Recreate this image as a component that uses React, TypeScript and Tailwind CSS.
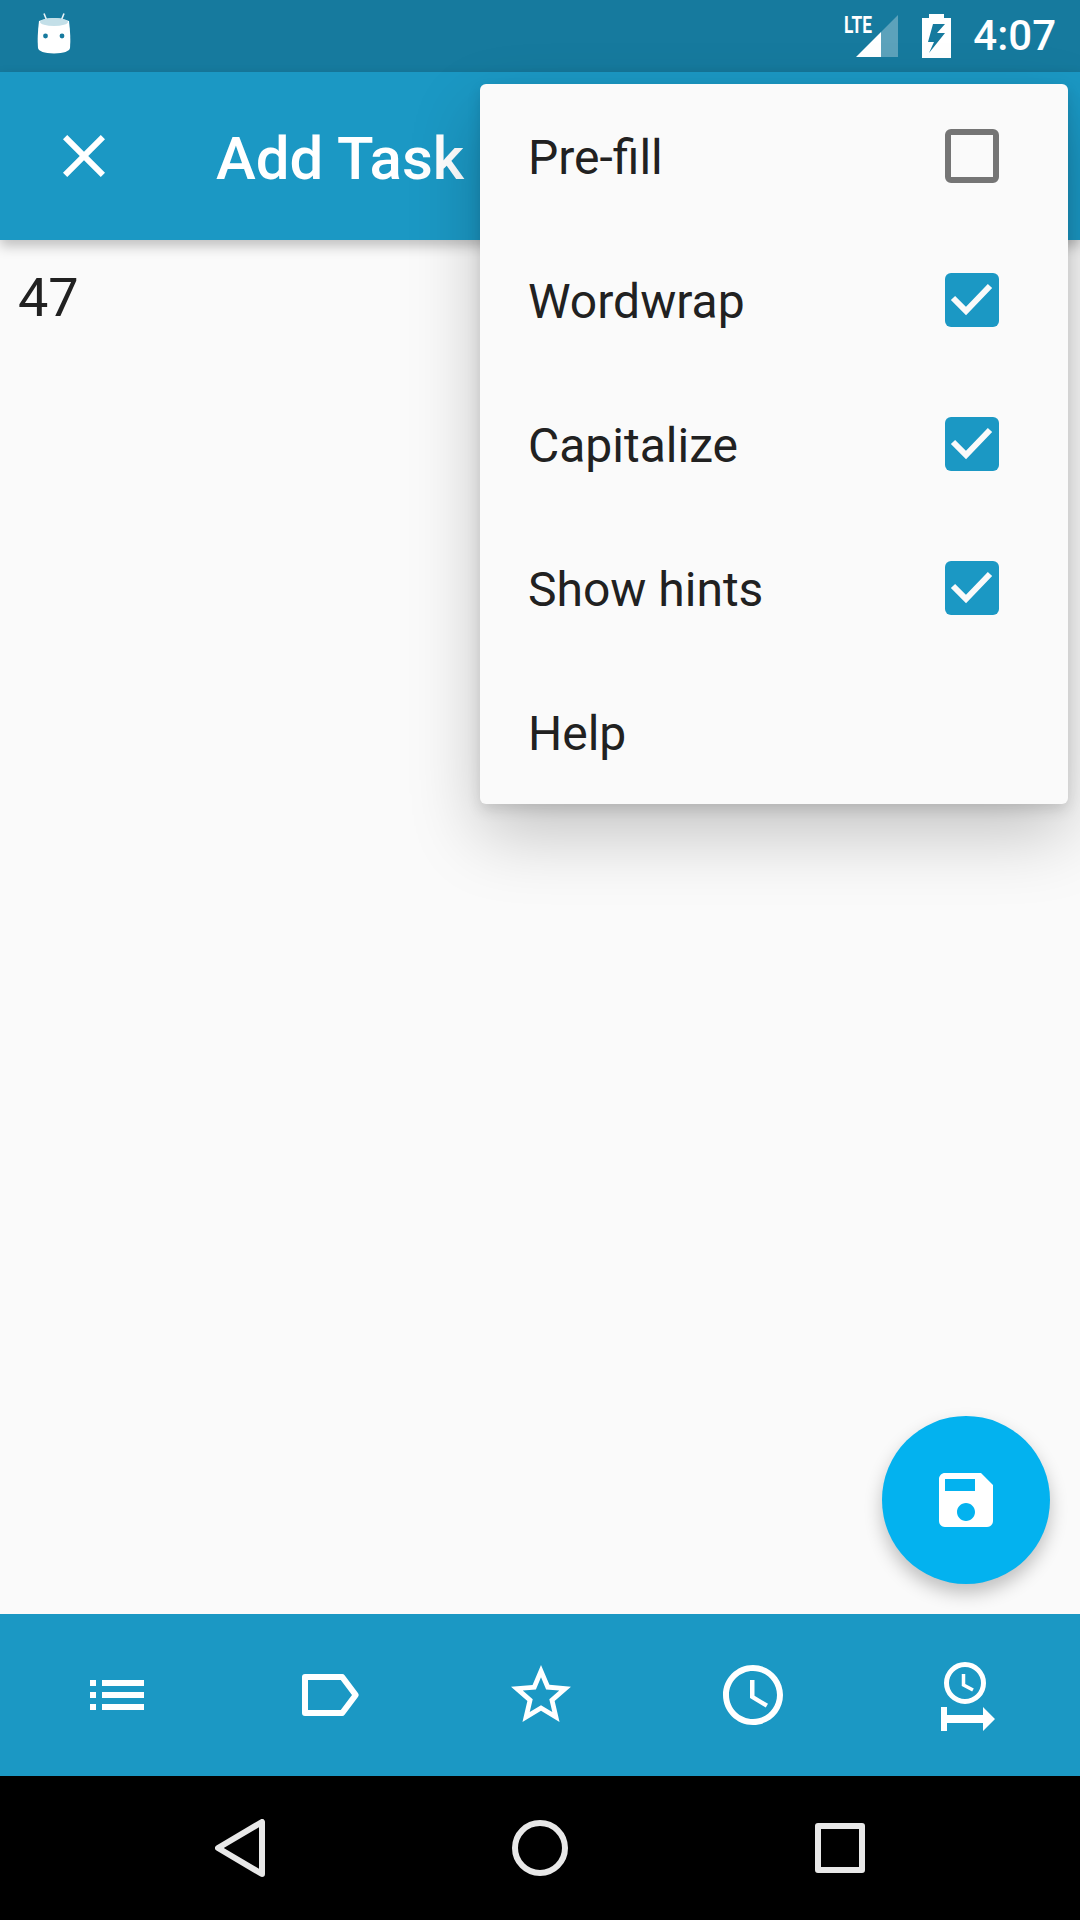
import React from 'react';

const menuItems = [
    { label: 'Pre-fill', checked: false },
    { label: 'Wordwrap', checked: true },
    { label: 'Capitalize', checked: true },
    { label: 'Show hints', checked: true },
    { label: 'Help' },
];

const Checkbox = ({ checked }: { checked: boolean }) =>
    checked ? (
        <span className="flex h-[54px] w-[54px] items-center justify-center rounded-[6px] bg-[#1b98c4]">
            <svg width="54" height="54" viewBox="0 0 54 54" fill="none">
                <path d="M8 25 L21 38 L45 13" stroke="#fafafa" strokeWidth="6" />
            </svg>
        </span>
    ) : (
        <span className="h-[54px] w-[54px] rounded-[6px] border-[6px] border-[#757575]" />
    );

const StatusBar = () => (
    <div className="relative flex h-[72px] shrink-0 items-center justify-between bg-[#167a9e] pr-[24px] pl-[37px]">
        {/* notification icon */}
        <svg width="34" height="42" viewBox="0 0 34 42" className="mt-[-5px]">
            <path d="M7 0.5 L10 8 M27 0.5 L24 8" stroke="#e8f3f7" strokeWidth="1.6" />
            <path d="M2 8 Q17 2 32 8 Q34 24 33 35 Q32 40 17 40.5 Q2 40 1 35 Q0 24 2 8 Z" fill="#ffffff" />
            <ellipse cx="17" cy="9" rx="14" ry="4" fill="#c3dfe8" />
            <circle cx="8.5" cy="23" r="2.4" fill="#167a9e" />
            <circle cx="25" cy="23" r="2.4" fill="#167a9e" />
        </svg>
        <div className="flex items-center">
            <div className="relative h-[72px] w-[54px]">
                <span className="absolute top-[11px] left-[-1px] origin-left scale-x-[0.72] font-['Roboto',sans-serif] text-[24px] leading-[28px] font-bold text-white">
                    LTE
                </span>
                <svg width="44" height="44" viewBox="0 0 44 44" className="absolute top-[14px] left-[10px]">
                    <path d="M1 43 L26 18 V43 Z" fill="#ffffff" />
                    <path d="M26 18 L43 1 V43 H26 Z" fill="#ffffff" fillOpacity="0.3" />
                </svg>
            </div>
            <svg width="29" height="44" viewBox="0 0 29 44" className="ml-[23px]">
                <path
                    fillRule="evenodd"
                    d="M7 0 H22 V4 H29 V44 H0 V4 H7 Z M11 10 L6 28 H12 L7 39 L23 19 H15 L23 10 Z"
                    fill="#ffffff"
                />
            </svg>
            <span className="ml-[22px] font-['Roboto',sans-serif] text-[42px] leading-none font-medium text-white">
                4:07
            </span>
        </div>
    </div>
);

const BottomBar = () => (
    <div className="grid h-[162px] shrink-0 grid-cols-5 items-center bg-[#1b98c4] pr-[9px] pl-[11px] text-white">
        <div className="flex justify-center">
            <svg width="72" height="72" viewBox="0 0 24 24" fill="currentColor">
                <path d="M3 13h2v-2H3v2zm0 4h2v-2H3v2zm0-8h2V7H3v2zm4 4h14v-2H7v2zm0 4h14v-2H7v2zM7 7v2h14V7H7z" />
            </svg>
        </div>
        <div className="flex justify-center">
            <svg width="72" height="72" viewBox="0 0 24 24" fill="none">
                <path d="M4 6 H16.4 L20.9 12 L16.4 18 H4 Z" stroke="currentColor" strokeWidth="2" strokeLinejoin="round" />
            </svg>
        </div>
        <div className="flex justify-center">
            <svg width="72" height="72" viewBox="0 0 24 24" fill="currentColor">
                <path d="M22 9.24l-7.19-.62L12 2 9.19 8.63 2 9.24l5.46 4.73L5.82 21 12 17.27 18.18 21l-1.63-7.03L22 9.24zM12 15.4l-3.76 2.27 1-4.28-3.32-2.88 4.38-.38L12 6.1l1.71 4.04 4.38.38-3.32 2.88 1 4.28L12 15.4z" />
            </svg>
        </div>
        <div className="flex justify-center">
            <svg width="72" height="72" viewBox="0 0 24 24" fill="currentColor">
                <path d="M11.99 2C6.47 2 2 6.48 2 12s4.47 10 9.99 10C17.52 22 22 17.52 22 12S17.52 2 11.99 2zM12 20c-4.42 0-8-3.58-8-8s3.58-8 8-8 8 3.58 8 8-3.58 8-8 8z" />
                <path d="M12.5 7H11v6l5.25 3.15.75-1.23-4.5-2.67z" />
            </svg>
        </div>
        <div className="flex justify-center">
            {/* clock above arrow to bar */}
            <svg width="72" height="72" viewBox="0 0 72 72" fill="none">
                <circle cx="36" cy="24" r="18.5" stroke="currentColor" strokeWidth="5" />
                <path d="M34.5 15 V26 L44 31" stroke="currentColor" strokeWidth="3.5" />
                <path d="M12 48 H18 V56 H54 V48 L66 60 L54 72 V64 H18 V72 H12 Z" fill="currentColor" />
            </svg>
        </div>
    </div>
);

const NavBar = () => (
    <div className="grid h-[144px] shrink-0 grid-cols-3 items-center bg-black px-[90px]">
        <div className="flex justify-center">
            <svg width="50" height="58" viewBox="0 0 50 58" fill="none">
                <path d="M3 29 L47 3 V55 Z" stroke="#e8e8e8" strokeWidth="6" strokeLinejoin="round" />
            </svg>
        </div>
        <div className="flex justify-center">
            <span className="h-[56px] w-[56px] rounded-full border-[6px] border-[#e8e8e8]" />
        </div>
        <div className="flex justify-center">
            <span className="h-[50px] w-[50px] rounded-[3px] border-[6px] border-[#e8e8e8]" />
        </div>
    </div>
);

export default function App() {
    return (
        <div className="relative flex h-[1920px] w-[1080px] flex-col overflow-hidden bg-[#fafafa] font-['Roboto',sans-serif]">
            <StatusBar />

            {/* toolbar */}
            <div className="relative z-10 flex h-[168px] shrink-0 items-center bg-[#1b98c4] pl-[48px] shadow-[0_6px_12px_rgba(0,0,0,0.24)]">
                <svg width="72" height="72" viewBox="0 0 24 24" fill="#ffffff">
                    <path d="M19 6.41L17.59 5 12 10.59 6.41 5 5 6.41 10.59 12 5 17.59 6.41 19 12 13.41 17.59 19 19 17.59 13.41 12z" />
                </svg>
                <h1 className="ml-[96px] pt-[5px] text-[60px] leading-none font-medium text-white">Add Task</h1>
            </div>

            {/* editor */}
            <div className="relative flex-1 pt-[26px] pl-[18px]">
                <p className="text-[54px] leading-[64px] text-[#212121]">47</p>

                <button className="absolute right-[30px] bottom-[30px] flex h-[168px] w-[168px] items-center justify-center rounded-full bg-[#03b2ef] shadow-[0_9px_18px_rgba(0,0,0,0.24)]">
                    <svg width="72" height="72" viewBox="0 0 24 24" fill="#ffffff">
                        <path d="M17 3H5c-1.11 0-2 .9-2 2v14c0 1.1.89 2 2 2h14c1.1 0 2-.9 2-2V7l-4-4zm-5 16c-1.66 0-3-1.34-3-3s1.34-3 3-3 3 1.34 3 3-1.34 3-3 3zm3-10H5V5h10v4z" />
                    </svg>
                </button>
            </div>

            <BottomBar />
            <NavBar />

            {/* overflow menu */}
            <div className="absolute top-[84px] right-[12px] z-20 w-[588px] rounded-[6px] bg-[#fafafa] shadow-[0_30px_70px_rgba(0,0,0,0.22),0_6px_14px_rgba(0,0,0,0.12)]">
                {menuItems.map((item) => (
                    <div key={item.label} className="flex h-[144px] items-center justify-between pr-[69px] pl-[48px]">
                        <span className="pt-[4px] text-[48px] leading-none text-[#212121]">{item.label}</span>
                        {item.checked !== undefined && <Checkbox checked={item.checked} />}
                    </div>
                ))}
            </div>
        </div>
    );
}
